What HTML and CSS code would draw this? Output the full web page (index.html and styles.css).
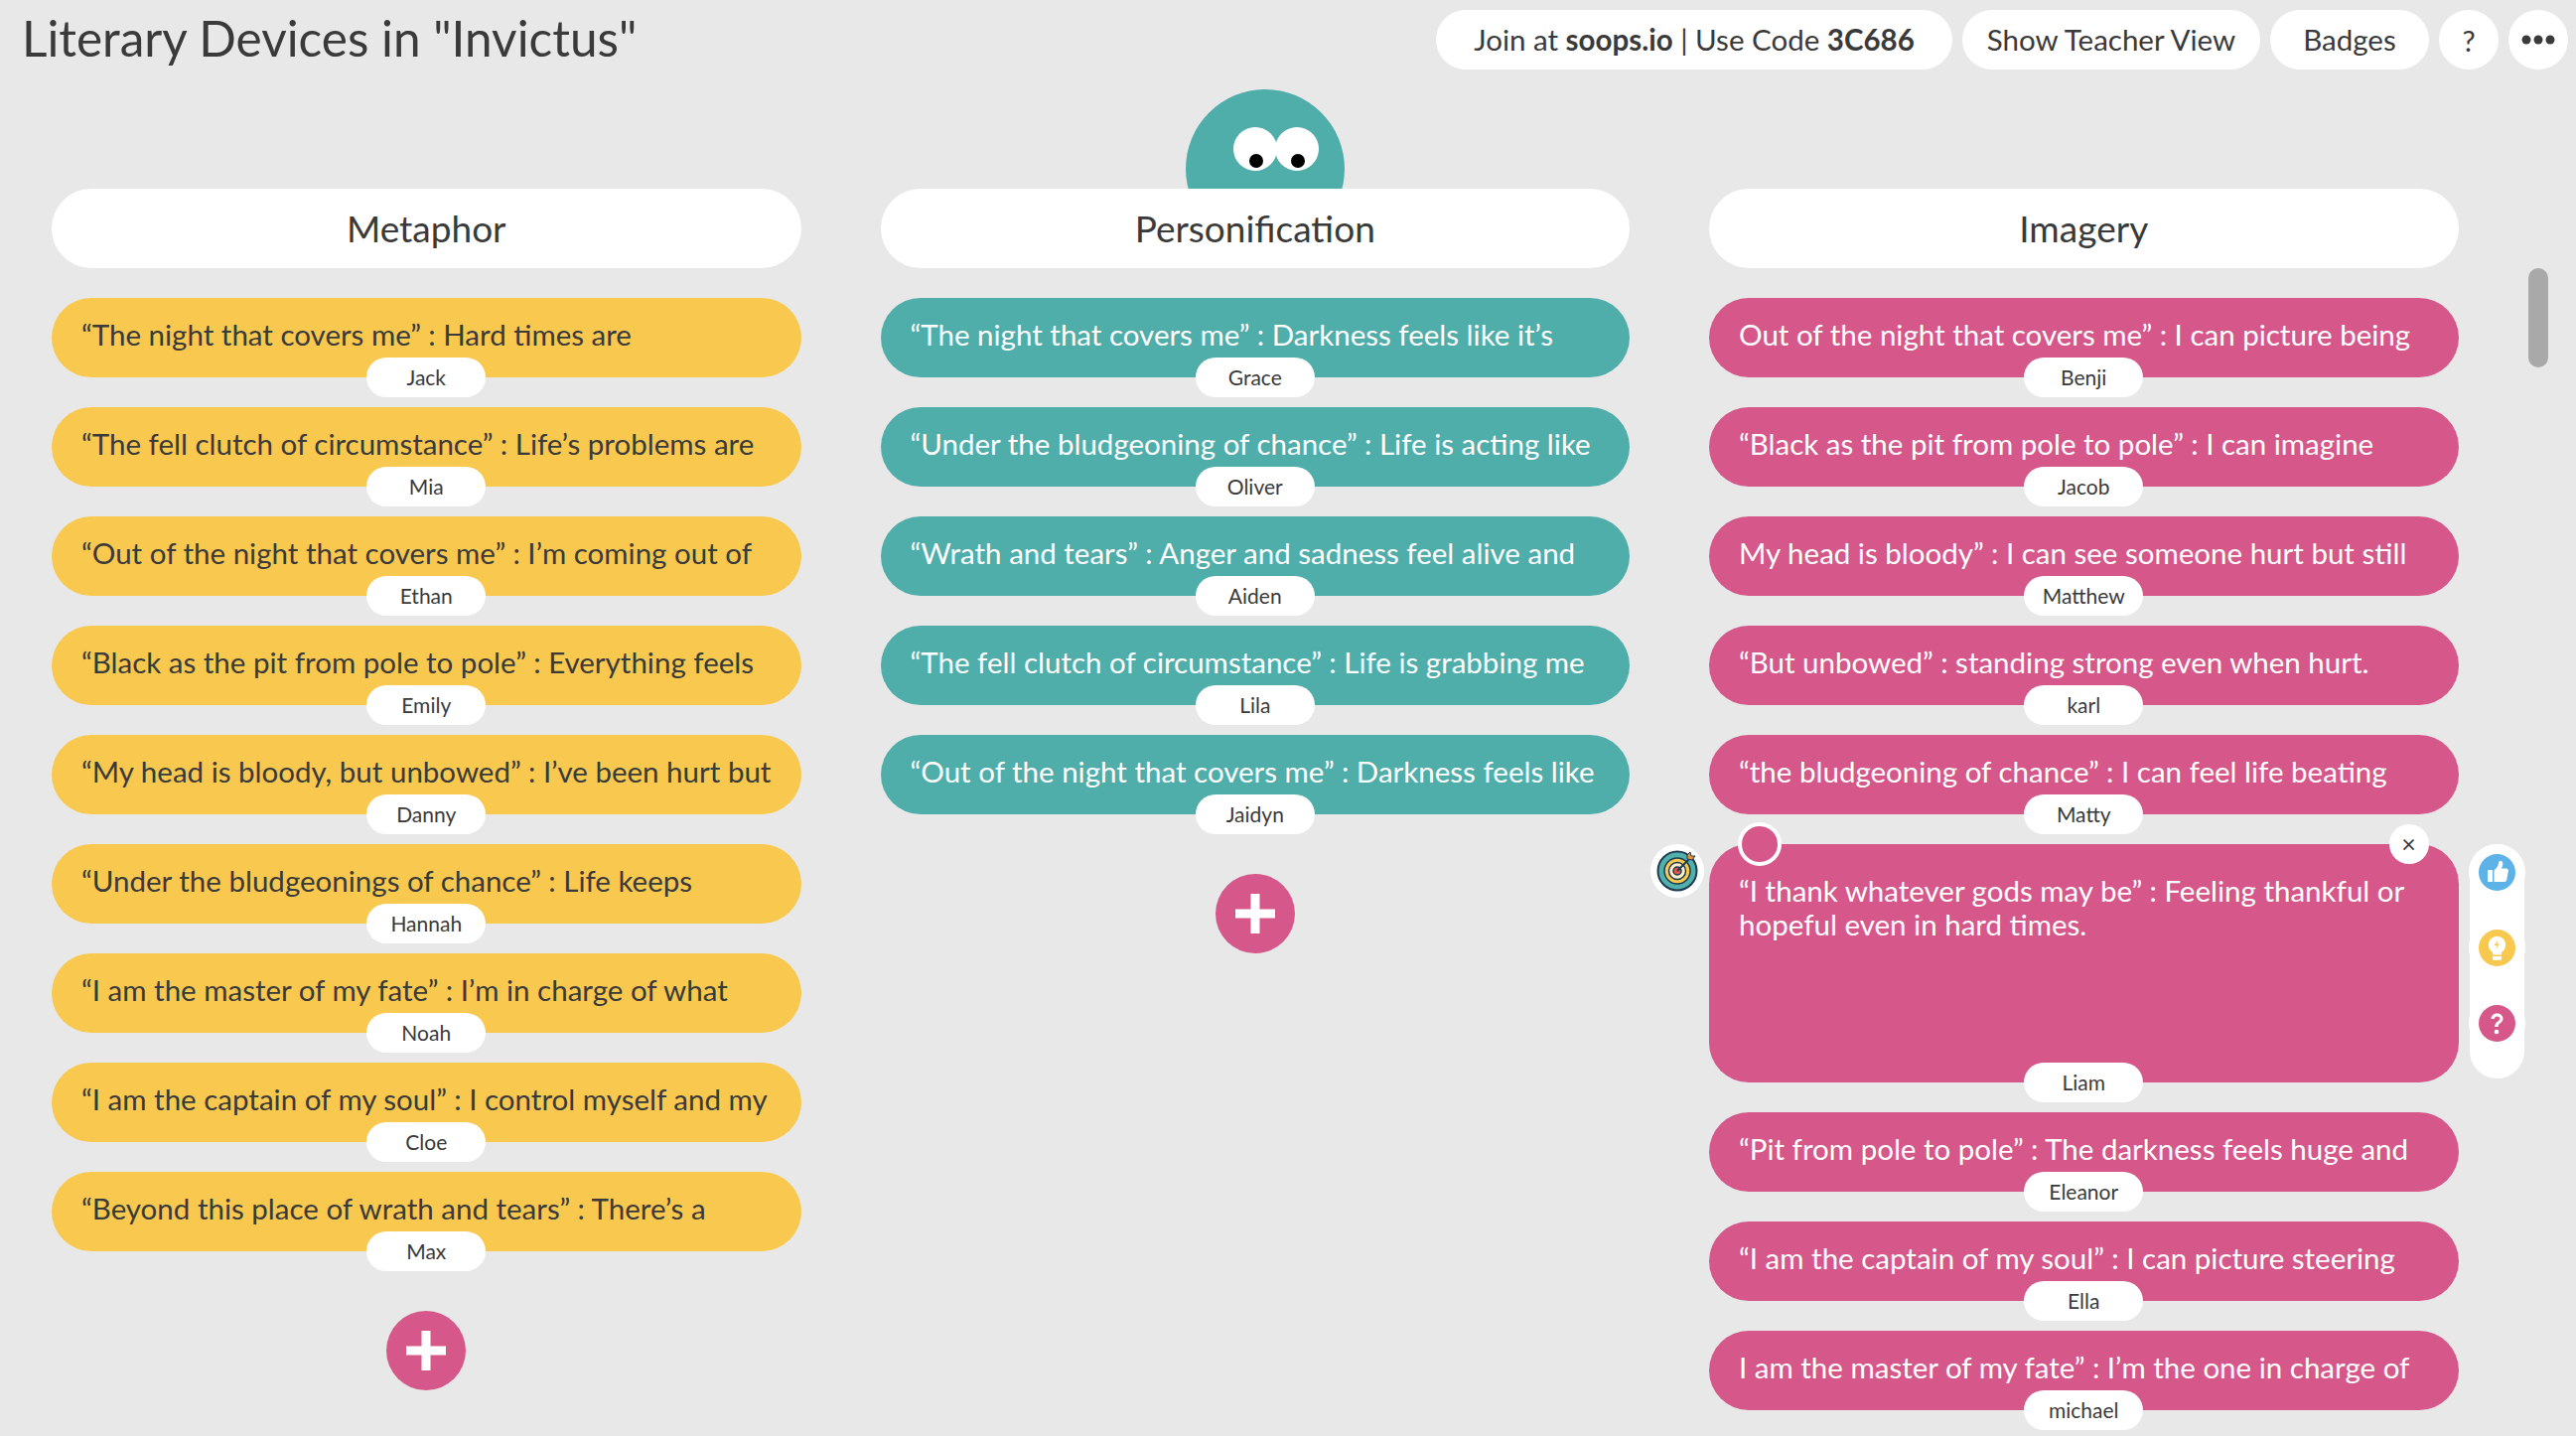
FILE: index.html
```html
<!DOCTYPE html>
<html lang="en">
<head>
<meta charset="utf-8">
<title>Literary Devices in "Invictus"</title>
<link rel="stylesheet" href="styles.css">
</head>
<body>
<header class="topbar">
  <h1 class="title">Literary Devices in "Invictus"</h1>
  <nav class="actions">
    <div class="pill join">Join at&nbsp;<b>soops.io</b>&nbsp;| Use Code&nbsp;<b>3C686</b></div>
    <div class="pill teacher">Show Teacher View</div>
    <div class="pill badges">Badges</div>
    <div class="pill round">?</div>
    <div class="pill round">
      <svg class="dots" width="34" height="10" viewBox="0 0 34 10"><circle cx="5" cy="5" r="4.500"/><circle cx="17" cy="5" r="4.500"/><circle cx="29" cy="5" r="4.500"/></svg>
    </div>
  </nav>
</header>

<main class="board">
  <section class="column yellow">
    <h2 class="col-head">Metaphor</h2>
    <div class="cards">
      <article class="card"><p>“The night that covers me” : Hard times are</p><span class="name">Jack</span></article>
      <article class="card"><p>“The fell clutch of circumstance” : Life’s problems are</p><span class="name">Mia</span></article>
      <article class="card"><p>“Out of the night that covers me” : I’m coming out of</p><span class="name">Ethan</span></article>
      <article class="card"><p>“Black as the pit from pole to pole” : Everything feels</p><span class="name">Emily</span></article>
      <article class="card"><p>“My head is bloody, but unbowed” : I’ve been hurt but</p><span class="name">Danny</span></article>
      <article class="card"><p>“Under the bludgeonings of chance” : Life keeps</p><span class="name">Hannah</span></article>
      <article class="card"><p>“I am the master of my fate” : I’m in charge of what</p><span class="name">Noah</span></article>
      <article class="card"><p>“I am the captain of my soul” : I control myself and my</p><span class="name">Cloe</span></article>
      <article class="card"><p>“Beyond this place of wrath and tears” : There’s a</p><span class="name">Max</span></article>
    </div>
    <div class="add"><svg width="40" height="40" viewBox="0 0 40 40"><path d="M15.500 0h9v15.500h15.500v9h-15.500v15.500h-9v-15.500h-15.500v-9h15.500z" fill="#fff"/></svg></div>
  </section>

  <section class="column teal">
    <div class="mascot">
      <span class="eye"><i class="pupil"></i></span>
      <span class="eye"><i class="pupil"></i></span>
    </div>
    <h2 class="col-head">Personification</h2>
    <div class="cards">
      <article class="card"><p>“The night that covers me” : Darkness feels like it’s</p><span class="name">Grace</span></article>
      <article class="card"><p>“Under the bludgeoning of chance” : Life is acting like</p><span class="name">Oliver</span></article>
      <article class="card"><p>“Wrath and tears” : Anger and sadness feel alive and</p><span class="name">Aiden</span></article>
      <article class="card"><p>“The fell clutch of circumstance” : Life is grabbing me</p><span class="name">Lila</span></article>
      <article class="card"><p>“Out of the night that covers me” : Darkness feels like</p><span class="name">Jaidyn</span></article>
    </div>
    <div class="add"><svg width="40" height="40" viewBox="0 0 40 40"><path d="M15.500 0h9v15.500h15.500v9h-15.500v15.500h-9v-15.500h-15.500v-9h15.500z" fill="#fff"/></svg></div>
  </section>

  <section class="column pink">
    <h2 class="col-head">Imagery</h2>
    <div class="cards">
      <article class="card"><p>Out of the night that covers me” : I can picture being</p><span class="name">Benji</span></article>
      <article class="card"><p>“Black as the pit from pole to pole” : I can imagine</p><span class="name">Jacob</span></article>
      <article class="card"><p>My head is bloody” : I can see someone hurt but still</p><span class="name">Matthew</span></article>
      <article class="card"><p>“But unbowed” : standing strong even when hurt.</p><span class="name">karl</span></article>
      <article class="card"><p>“the bludgeoning of chance” : I can feel life beating</p><span class="name">Matty</span></article>
      <article class="card open">
        <p>“I thank whatever gods may be” : Feeling thankful or<br>hopeful even in hard times.</p>
        <span class="name">Liam</span>
        <span class="handle"></span>
        <span class="close">×</span>
        <span class="target">
          <svg width="42" height="42" viewBox="0 0 42 42">
            <circle cx="21" cy="21" r="19.500" fill="#4fb0ac" stroke="#1f3b52" stroke-width="2"/>
            <circle cx="21" cy="21" r="13" fill="#f8c84f" stroke="#1f3b52" stroke-width="1.500"/>
            <circle cx="21" cy="21" r="8.500" fill="#fdf0c8" stroke="#1f3b52" stroke-width="1.500"/>
            <circle cx="21" cy="21" r="4" fill="#e0564f" stroke="#1f3b52" stroke-width="1.500"/>
            <path d="M21 21 34 8" stroke="#1f3b52" stroke-width="2"/>
            <path d="M31 5l3-3 1 4 4 0-3 4-5-1z" fill="#e8913a" stroke="#1f3b52" stroke-width="1"/>
          </svg>
        </span>
        <aside class="reactions">
          <span class="react">
            <svg width="37" height="37" viewBox="0 0 37 37"><circle cx="18.500" cy="18.500" r="18.500" fill="#5db2e8"/><path d="M9 16h5v12H9z" fill="#fff"/><path d="M15.500 16.500c2.500-2 4.500-5 5-9 .3-1.500 3.500-1 3.800 1.500.2 2-.6 4-1.300 5.500h4.500c1.800 0 2.600 1.300 2.300 2.800l-1.500 8.500c-.3 1.400-1.200 2.200-2.600 2.200h-10.200z" fill="#fff"/></svg>
          </span>
          <span class="react">
            <svg width="37" height="37" viewBox="0 0 37 37"><circle cx="18.500" cy="18.500" r="18.500" fill="#f8c84f"/><circle cx="18.500" cy="15.500" r="8.700" fill="#fff"/><path d="M14 20h9v5.500h-9z" fill="#fff"/><path d="M19.500 10l-3.800 6h2.600l-1.300 4.300 3.800-6h-2.600z" fill="#f8c84f"/><path d="M14 27h9v3.800h-9z" fill="#fff"/></svg>
          </span>
          <span class="react">
            <svg width="37" height="37" viewBox="0 0 37 37"><circle cx="18.500" cy="18.500" r="18.500" fill="#d6578a"/><path d="M12.500 14c0-3.500 2.800-5.500 6-5.500s6 2 6 5.200c0 4.300-5 4.300-5 8.300h-3.300c0-5.500 5-5.500 5-8.300 0-1.300-1.200-2.200-2.700-2.200s-2.700 1-2.700 2.500z" fill="#fff"/><circle cx="18" cy="27" r="2.300" fill="#fff"/></svg>
          </span>
        </aside>
      </article>
      <article class="card"><p>“Pit from pole to pole” : The darkness feels huge and</p><span class="name">Eleanor</span></article>
      <article class="card"><p>“I am the captain of my soul” : I can picture steering</p><span class="name">Ella</span></article>
      <article class="card"><p>I am the master of my fate” : I’m the one in charge of</p><span class="name">michael</span></article>
    </div>
  </section>
</main>
<div class="scrollbar"></div>
</body>
</html>
```
FILE: styles.css
```css
* { box-sizing: border-box; }
body {
  margin: 0;
  height: 1446px;
  overflow: hidden;
  position: relative;
  padding-top: 10px;
  background: #e8e8e8;
  color: #3a3a3a;
  font-family: "Lato", "Liberation Sans", sans-serif;
}
.topbar {
  display: flex;
  justify-content: space-between;
  align-items: center;
  height: 60px;
  padding: 0 8px 0 22px;
}
.title {
  margin: 0;
  padding-bottom: 4px;
  font-size: 49.500px;
  font-weight: 400;
  line-height: 60px;
  white-space: nowrap;
}
.actions { display: flex; gap: 10px; }
.pill {
  display: flex;
  align-items: center;
  justify-content: center;
  height: 60px;
  padding-bottom: 2px;
  border-radius: 30px;
  background: #fff;
  font-size: 29.500px;
  white-space: nowrap;
}
.pill b { font-weight: 700; }
.join { width: 520px; }
.teacher { width: 300px; }
.badges { width: 160px; }
.pill.round { width: 60px; padding: 0; }
.dots { fill: #3a3a3a; }
.board {
  display: flex;
  gap: 80px;
  padding: 120px 0 0 52px;
}
.column { position: relative; display: flex; flex-direction: column; width: 754.500px; }
.col-head {
  position: relative;
  height: 80px;
  margin: 0 0 30px;
  border-radius: 40px;
  background: #fff;
  font-size: 37px;
  font-weight: 400;
  line-height: 80px;
  text-align: center;
}
.cards { display: flex; flex-direction: column; gap: 30px; }
.card {
  position: relative;
  height: 80px;
  border-radius: 40px;
  padding: 20px 30px 0;
}
.card p {
  margin: 0;
  font-size: 29.500px;
  line-height: 34px;
  white-space: nowrap;
}
.yellow .card { background: #f8c84f; color: #3a3a3a; }
.teal .card { background: #4fadaa; color: #fff; }
.pink .card { background: #d6578a; color: #fff; }
.name {
  position: absolute;
  left: 50%;
  bottom: -20px;
  width: 120px;
  height: 40px;
  margin-left: -60px;
  border-radius: 20px;
  background: #fff;
  color: #3a3a3a;
  font-size: 21px;
  line-height: 40px;
  text-align: center;
}
.add {
  display: flex;
  align-items: center;
  justify-content: center;
  align-self: center;
  width: 80px;
  height: 80px;
  margin-top: 60px;
  border-radius: 50%;
  background: #d6578a;
}
.mascot {
  position: absolute;
  left: 307px;
  top: -100px;
  display: flex;
  width: 160px;
  height: 160px;
  padding: 38px 0 0 48px;
  border-radius: 50%;
  background: #4fadaa;
}
.eye {
  position: relative;
  width: 44px;
  height: 44px;
  margin-right: -2px;
  border-radius: 50%;
  background: #fff;
}
.pupil {
  position: absolute;
  left: 16px;
  top: 27px;
  width: 14px;
  height: 14px;
  border-radius: 50%;
  background: #000;
}
.card.open { height: 240px; padding-top: 30px; }
.handle {
  position: absolute;
  left: 29px;
  top: -22px;
  width: 44px;
  height: 44px;
  border: 4px solid #fff;
  border-radius: 50%;
  background: #d6578a;
}
.close {
  position: absolute;
  right: 30px;
  top: -20px;
  width: 40px;
  height: 40px;
  border-radius: 50%;
  background: #fff;
  color: #3a3a3a;
  font-size: 25px;
  line-height: 38px;
  text-align: center;
}
.target {
  position: absolute;
  left: -59px;
  top: 0;
  display: flex;
  align-items: center;
  justify-content: center;
  width: 54px;
  height: 54px;
  border-radius: 50%;
  background: #fff;
}
.reactions {
  position: absolute;
  left: 766px;
  top: 0;
  display: flex;
  flex-direction: column;
  gap: 19px;
  width: 55px;
  height: 236px;
  border-radius: 28px;
  background: #fff;
}
.react {
  display: flex;
  align-items: center;
  justify-content: center;
  width: 57px;
  height: 57px;
  margin-left: -1px;
  border-radius: 50%;
  background: #fff;
}
.scrollbar {
  position: absolute;
  left: 2546px;
  top: 270px;
  width: 20px;
  height: 100px;
  border-radius: 10px;
  background: #a9a9a9;
}
```
